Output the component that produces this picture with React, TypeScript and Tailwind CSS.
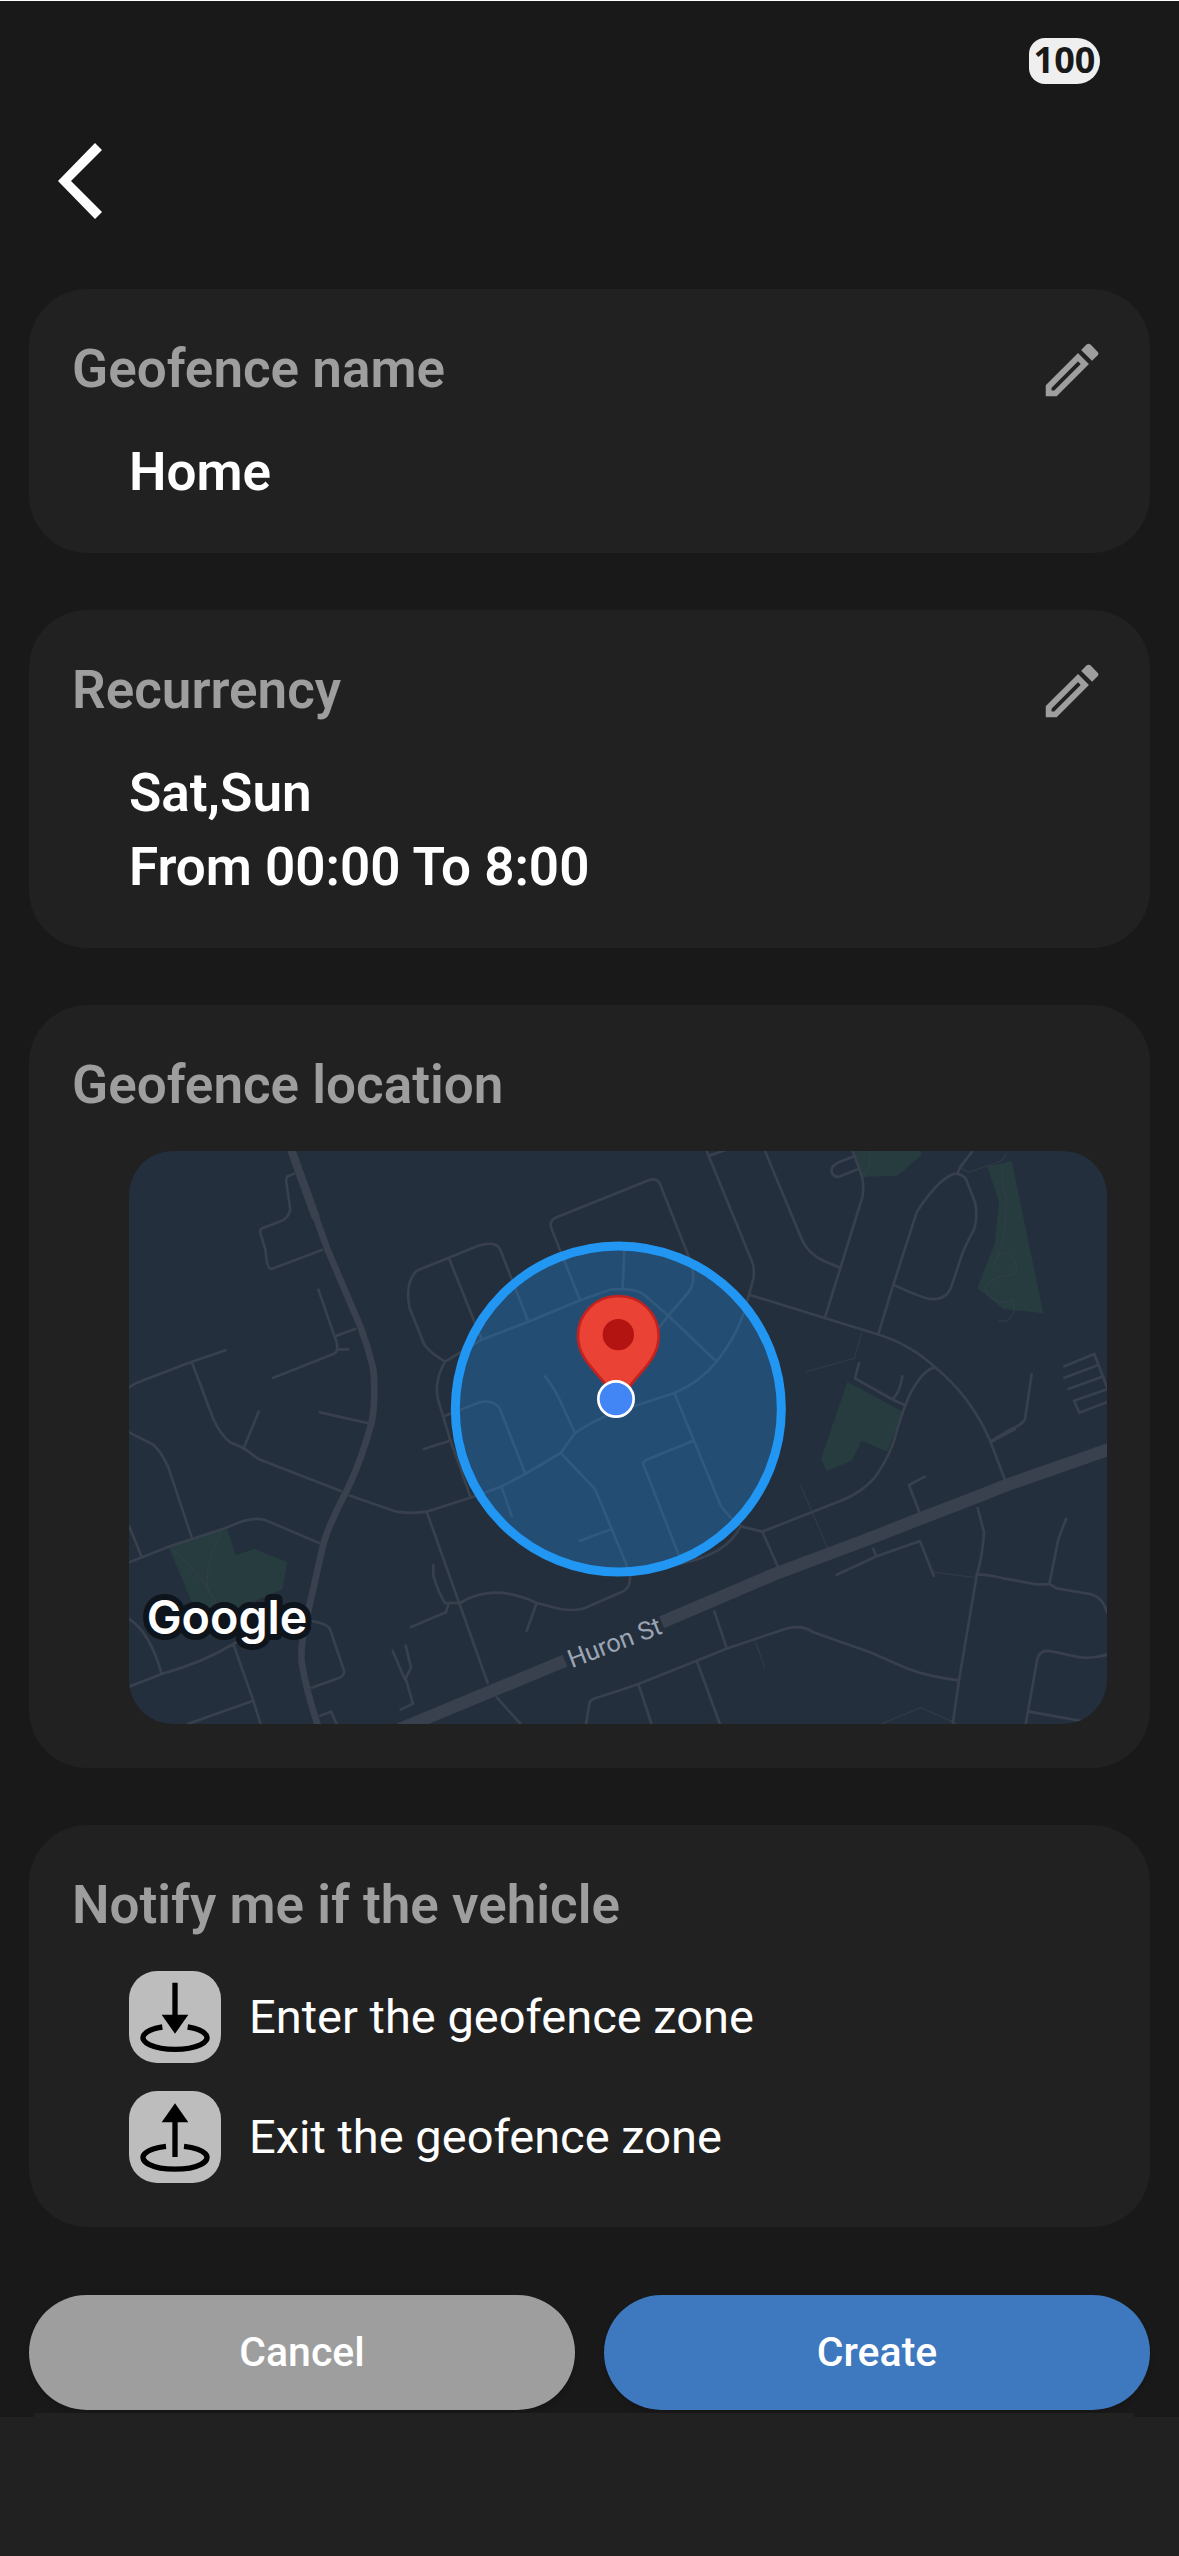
import React from 'react';
import { MdOutlineEdit } from 'react-icons/md';

interface MapTile {
  id: string;
  offset: string;
  parks: string[];
  roads: string[];
  trails: string[];
}

// Map vectors, one entry per quadrant
const TILES: MapTile[] = [
  {
    id: 'nw',
    offset: 'translate(0 0)',
    parks: [],
    roads: [
      'M522 104L503 112Q497 118 499 130L511 212Q505 240 475 250L430 266Q418 272 421 282L437 335Q440 390 455 390L605 333',
      'M595 452L650 610Q656 640 640 645L460 716M645 592L705 570M652 632L684 631',
      'M27 745Q45 732 80 720L215 668L317 634M215 668L280 840Q300 885 330 910L372 928L415 960L662 1056M416 818L370 930',
      'M600 820L742 852',
      'M27 880L100 917Q125 940 145 985L215 1195',
      'M975 668L1085 602L1225 548L1380 484L1470 452Q1540 445 1570 465L1645 530L1790 668',
      'M975 668Q920 635 910 610L868 505Q855 430 890 395L1075 320Q1125 305 1140 330L1225 548M987 358L1085 602',
      'M975 668Q940 730 955 785L990 900L1050 1070',
      'M1380 484L1295 270Q1285 245 1310 235L1590 122Q1612 118 1620 135L1705 350Q1735 425 1705 460L1645 530L1610 575',
      'M975 830L1080 790Q1120 780 1140 810L1175 900L1215 1002',
      'M1275 712Q1305 750 1320 785L1365 882Q1420 845 1480 822L1663 762Q1740 730 1790 668Q1850 590 1872 520L1900 420Q1905 385 1895 365L1760 36',
    ],
    trails: [],
  },
  {
    id: 'ne',
    offset: 'translate(1470 0)',
    parks: [
      'M728 36L930 36L935 48L862 110L760 114Z',
      'M1132 82L1205 66L1300 523L1180 510L1102 448L1155 310L1167 190Z',
      'M712 728L878 818L832 938L755 905L725 965L650 996L633 960Z',
    ],
    roads: [
      'M38 445L43 335',
      'M297 50L350 32M465 36L575 300Q595 345 640 365L690 386',
      'M728 36L750 95Q765 130 757 175L645 535M733 52L690 68Q655 85 668 105Q675 117 690 112L745 90',
      'M420 468L800 585Q900 615 975 685Q1080 770 1138 900L1185 1022',
      'M805 585L850 437L920 220Q980 125 1030 105Q1060 103 1070 125L1095 190Q1105 240 1090 275Q1060 330 1050 365L1025 440Q1010 485 960 480Q930 475 850 437',
      'M1042 105L1050 85L1088 36',
      'M747 672L735 718L845 780L887 800M877 712Q870 760 848 780',
      'M975 685Q940 690 900 765Q880 810 862 870Q845 945 795 1015Q755 1060 700 1082L457 1178',
      'M193 762L330 1095Q345 1125 395 1163L457 1178L503 1282',
      'M1265 705L1245 840Q1240 855 1200 872L1145 905',
      'M1363 682L1453 645L1491 745M1363 716L1465 678M1375 750L1480 712M1495 750L1392 785L1408 821L1495 788',
    ],
    trails: [
      'M755 582L733 658L590 698',
      'M1175 80L1178 140L1190 180L1185 260L1175 320L1150 380Q1175 315 1210 360Q1235 405 1200 408Q1150 410 1125 445Q1130 480 1180 490L1208 482L1212 520L1192 547L1167 545',
      'M1050 85L1075 100L1140 78L1175 65L1190 44M780 36Q785 90 760 105',
    ],
  },
  {
    id: 'sw',
    offset: 'translate(0 870)',
    parks: ['M147 356L320 296L347 378L405 360L502 400L488 480L300 560L215 520Z'],
    roads: [
      'M1365 12L1322 72L1215 135L1145 172L1085 195L920 248Q870 255 830 248L690 200',
      'M1322 72L1425 180L1475 300L1500 360Q1525 420 1530 440Q1532 475 1510 487L1400 535Q1370 548 1320 540L1250 522Q1120 460 1020 522L975 522Q955 490 940 440L940 408',
      'M985 525L978 550L873 594M1250 522L1220 606M920 248L1103 762M1145 175L1175 260M1475 300L1380 335M912 60L990 35',
      'M27 400L150 352L320 296Q400 258 440 275L597 342M65 383L27 290',
      'M27 570Q90 610 125 735M27 773L125 735Q250 700 340 645L380 620M340 645L400 815L422 886M205 884L400 815',
      'M565 575Q620 582 630 600L672 725Q675 740 655 748L575 776',
      'M600 860L633 848L650 886M818 665L855 752L873 716L857 650M858 752L879 824L842 842',
      'M1130 805L1203 886M1398 886L1408 825Q1408 812 1430 806L1500 784L1555 765',
    ],
    trails: ['M150 356Q240 430 290 525M310 300Q250 400 265 490'],
  },
  {
    id: 'se',
    offset: 'translate(1470 870)',
    parks: [],
    roads: [
      'M250 35L110 92Q95 98 102 112L205 375M215 403Q350 375 390 295',
      'M945 143L897 168L928 250M1145 38L1215 0',
      'M680 437L800 382L930 336L971 440M790 360L798 380',
      'M1103 237L1122 310Q1118 380 1100 440L1047 754L1028 886',
      'M1100 437Q1130 435 1180 448L1280 466L1320 466L1340 478L1440 495Q1480 505 1491 550M1368 270L1345 330L1318 466',
      'M1247 886L1282 690Q1290 660 1325 667L1410 685Q1450 690 1495 676M1257 848L1415 876',
      'M85 765L260 695L355 657L510 605Q570 582 610 610L780 670L890 718Q960 745 1047 754',
      'M313 547L350 657M85 765L125 886M260 695L330 886',
    ],
    trails: ['M572 168L652 356M435 635L465 716M815 884L933 836L1040 884M972 430L1100 446'],
  },
];

const GeofenceMap: React.FC = () => (
  <svg
    viewBox="27 36 2934 1719"
    className="block w-full rounded-[44px] bg-[#242f3d]"
    role="img"
    aria-label="Geofence map"
  >
    {TILES.map((tile) => (
      <g key={tile.id} transform={tile.offset} fill="#263c3f">
        {tile.parks.map((d) => (
          <path key={d} d={d} />
        ))}
      </g>
    ))}
    {TILES.map((tile) => (
      <g key={tile.id} transform={tile.offset} fill="none" stroke="#38404d" strokeLinejoin="round" strokeLinecap="round">
        <path d={tile.roads.join('')} strokeWidth="8" />
        <path d={tile.trails.join('')} strokeWidth="4" opacity="0.6" />
      </g>
    ))}

    {/* Main roads */}
    <g fill="none" stroke="#38414d">
      <path
        d="M513 30L575 200L622 330L720 560Q745 625 760 690Q768 780 755 850Q725 960 685 1045Q625 1160 610 1215L565 1415Q540 1510 545 1570Q560 1660 594 1760"
        strokeWidth="20"
      />
      <path d="M513 30L588 238" strokeWidth="25" />
      <path d="M840 1770L1335 1565M1625 1450L1960 1307L2250 1198L2398 1140L2573 1073L2655 1040L2975 928" strokeWidth="38" />
    </g>

    {/* Zone radius */}
    <circle cx="1495" cy="810" r="489" fill="#2196f3" fillOpacity="0.3" stroke="#2196f3" strokeWidth="27" />

    {/* Pin */}
    <path
      d="M1495 471C1427 471 1374 524 1374 590C1374 650 1412 682 1448 725Q1478 762 1495 810Q1512 762 1542 725C1578 682 1616 650 1616 590C1616 524 1563 471 1495 471Z"
      fill="#ea4335"
      stroke="#c5221f"
      strokeWidth="8"
    />
    <circle cx="1495" cy="587" r="47" fill="#b31412" />
    <circle cx="1488" cy="780" r="53" fill="#4285f4" stroke="#fff" strokeWidth="8" />

    <text
      transform="translate(1355 1588) rotate(-21)"
      className="font-[Roboto,sans-serif] text-[76px]"
      fill="#9ca5b3"
      stroke="#242f3d"
      strokeWidth="14"
      paintOrder="stroke"
    >
      Huron St
    </text>
    <text
      x="80"
      y="1485"
      className="font-[Inter,sans-serif] text-[140px] font-semibold"
      fill="#fff"
      stroke="#0e141b"
      strokeWidth="36"
      strokeLinejoin="round"
      paintOrder="stroke"
    >
      Google
    </text>
  </svg>
);

const EnterIcon: React.FC = () => (
  <svg viewBox="0 0 276 276" className="size-[92px] shrink-0 rounded-[28px] bg-[#bdbdbd]" aria-hidden="true">
    <path d="M130 35h16v96h32l-40 57-40-57h32z" />
    <path d="M100 168A96 35 0 1 0 176 168" fill="none" stroke="#000" strokeWidth="16" />
  </svg>
);

const ExitIcon: React.FC = () => (
  <svg viewBox="0 0 276 276" className="size-[92px] shrink-0 rounded-[28px] bg-[#bdbdbd]" aria-hidden="true">
    <path d="M138 37l40 57h-32v104h-16V94H98z" />
    <path d="M111 166A96 35 0 1 0 165 166" fill="none" stroke="#000" strokeWidth="16" />
  </svg>
);

interface CardProps {
  title: string;
  editable?: boolean;
  children: React.ReactNode;
}

const Card: React.FC<CardProps> = ({ title, editable, children }) => (
  <section className="rounded-[58px] bg-[#212121] px-[43px] pt-[46px] pb-[44px]">
    <div className="flex h-[70px] items-center justify-between">
      <h2 className="text-[53px] font-semibold text-[#9e9e9e]">{title}</h2>
      {editable && (
        <button type="button" aria-label={`Edit ${title}`} className="text-[#9e9e9e]">
          <MdOutlineEdit size={70} />
        </button>
      )}
    </div>
    <div className="mt-[30px] pl-[57px]">{children}</div>
  </section>
);

const App: React.FC = () => {
  return (
    <div className="flex min-h-screen flex-col border-t border-white bg-[#191919] font-[Roboto,sans-serif] text-white">
      {/* Status bar */}
      <div className="flex justify-end pt-[37px] pr-[79px]">
        <span className="flex h-[46px] w-[71px] items-center justify-center rounded-l-[16px] rounded-r-[23px] bg-[#efefef] pb-[2px] font-['Open_Sans',sans-serif] text-[36px] font-bold text-[#191919]">
          100
        </span>
      </div>

      <header className="px-[58px] pt-[59px] pb-[70px]">
        <button type="button" aria-label="Back" className="block">
          <svg viewBox="0 0 44 76" className="h-[76px] w-[44px]" fill="#fff">
            <path d="M37 0L44 7L13 38L44 69L37 76L0 38Z" />
          </svg>
        </button>
      </header>

      <main className="flex flex-col gap-[57px] px-[29px]">
        <Card title="Geofence name" editable>
          <p className="text-[53px] leading-[74px] font-semibold">Home</p>
        </Card>

        <Card title="Recurrency" editable>
          <p className="text-[53px] leading-[74px] font-semibold">Sat,Sun</p>
          <p className="text-[53px] leading-[74px] font-semibold">From 00:00 To 8:00</p>
        </Card>

        <Card title="Geofence location">
          <GeofenceMap />
        </Card>

        <Card title="Notify me if the vehicle">
          <ul className="flex flex-col gap-[28px]">
            <li className="flex items-center gap-[28px] text-[47px]">
              <EnterIcon />
              Enter the geofence zone
            </li>
            <li className="flex items-center gap-[28px] text-[47px]">
              <ExitIcon />
              Exit the geofence zone
            </li>
          </ul>
        </Card>
      </main>

      <div className="flex gap-[29px] px-[29px] pt-[68px] pb-[3px] text-[41px] font-medium">
        <button type="button" className="h-[115px] flex-1 rounded-full bg-[#9e9e9e] shadow-md">
          Cancel
        </button>
        <button type="button" className="h-[115px] flex-1 rounded-full bg-[#3e78be] shadow-md">
          Create
        </button>
      </div>

      <div className="mr-[45px] ml-[34px] h-[4px] bg-[#212121]" />
      <div className="flex-1 bg-[#212121]" />
    </div>
  );
};

export default App;
